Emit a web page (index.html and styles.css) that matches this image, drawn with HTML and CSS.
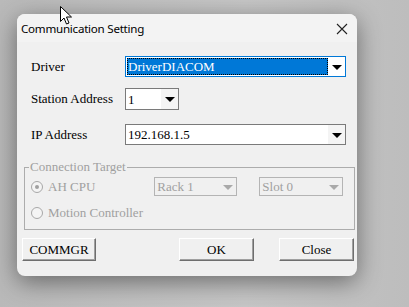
FILE: index.html
```html
<!DOCTYPE html>
<html lang="en">
<head>
    <meta charset="UTF-8">
    <title>Communication Setting</title>
    <link rel="stylesheet" href="styles.css">
</head>
<body>
    <div class="dialog">
        <div class="titlebar">
            <span class="title">Communication Setting</span>
            <svg class="close-icon" width="12" height="12" viewBox="0 0 12 12">
                <path d="M1 1 L11 11 M11 1 L1 11" stroke="#222" stroke-width="1.1" fill="none"/>
            </svg>
        </div>

        <div class="form">
            <div class="row row-driver">
                <label>Driver</label>
                <div class="combo combo-focus combo-wide">
                    <span class="combo-value selected">DriverDIACOM</span>
                    <span class="combo-arrow"></span>
                </div>
            </div>
            <div class="row row-station">
                <label>Station Address</label>
                <div class="combo combo-small">
                    <span class="combo-value">1</span>
                    <span class="combo-arrow shaded"></span>
                </div>
            </div>
            <div class="row row-ip">
                <label>IP Address</label>
                <div class="combo combo-wide">
                    <span class="combo-value">192.168.1.5</span>
                    <span class="combo-arrow shaded"></span>
                </div>
            </div>
        </div>

        <fieldset class="group">
            <legend>Connection Target</legend>
            <div class="group-row">
                <span class="radio checked"></span>
                <span class="radio-label">AH CPU</span>
                <div class="combo combo-disabled combo-rack">
                    <span class="combo-value">Rack 1</span>
                    <span class="combo-arrow"></span>
                </div>
                <div class="combo combo-disabled combo-slot">
                    <span class="combo-value">Slot 0</span>
                    <span class="combo-arrow"></span>
                </div>
            </div>
            <div class="group-row">
                <span class="radio"></span>
                <span class="radio-label">Motion Controller</span>
            </div>
        </fieldset>

        <div class="buttons">
            <button class="btn btn-commgr">COMMGR</button>
            <button class="btn btn-ok">OK</button>
            <button class="btn btn-close">Close</button>
        </div>
    </div>

    <svg class="cursor" width="14" height="20" viewBox="0 0 14 20">
        <path d="M0.5 0.5 L0.5 15.5 L4 12 L6.5 18 L9 17 L6.5 11 L11.5 11 Z" fill="#fff" stroke="#000" stroke-width="1"/>
    </svg>
</body>
</html>
```

FILE: styles.css
```css
body {
    margin: 0;
    width: 409px;
    height: 307px;
    overflow: hidden;
    background: linear-gradient(90deg, #b9b9b9 0%, #c6c6c6 60%, #bdbdbd 100%);
    font-family: "Liberation Serif", "Times New Roman", serif;
    font-size: 13px;
    color: #000;
}

.dialog {
    margin: 14px 0 0 17px;
    width: 340px;
    height: 262px;
    background-color: #f0f0f0;
    border-radius: 8px;
    box-shadow: 0 6px 24px rgba(0, 0, 0, 0.45);
    overflow: hidden;
}

.titlebar {
    height: 28px;
    display: flex;
    align-items: center;
    justify-content: space-between;
    padding: 0 9px 0 4px;
    background-color: #f3f3f3;
}

.title {
    font-family: "Noto Sans", "Open Sans", sans-serif;
    font-size: 11.6px;
    letter-spacing: -0.25px;
    color: #000;
}

.close-icon {
    margin-top: 1px;
}

.form {
    padding: 14px 0 0 14px;
}

.row {
    display: flex;
    align-items: center;
}

.row label {
    width: 94px;
}

.row-station {
    margin-top: 11px;
}

.row-ip {
    margin-top: 14px;
}

/* combo boxes */
.combo {
    box-sizing: border-box;
    height: 21px;
    display: flex;
    align-items: center;
    border: 1px solid #7a7a7a;
    background-color: #fff;
}

.combo-wide {
    width: 221px;
}

.combo-small {
    width: 54px;
    height: 22px;
}

.combo-focus {
    border-color: #0078d7;
}

.combo-value {
    flex: 1;
    padding-left: 2px;
    line-height: 17px;
    white-space: nowrap;
}

.combo-value.selected {
    margin: 1px 0 1px 1px;
    padding-left: 1px;
    background-color: #0078d7;
    color: #fff;
    outline: 1px dotted #000;
    outline-offset: -1px;
}

.combo-arrow {
    width: 17px;
    height: 100%;
    position: relative;
}

.combo-arrow.shaded {
    background-color: #f4f4f4;
}

.combo-arrow::after {
    content: "";
    position: absolute;
    left: 4px;
    top: 50%;
    margin-top: -2px;
    border-left: 5px solid transparent;
    border-right: 5px solid transparent;
    border-top: 5px solid #000;
}

.combo-disabled {
    height: 19px;
    border-color: #b4b4b4;
    background-color: #f0f0f0;
    color: #a0a0a0;
}

.combo-disabled .combo-value {
    padding-left: 2px;
}

.combo-disabled .combo-arrow::after {
    border-top-color: #a9a9a9;
}

.combo-rack {
    width: 83px;
    margin-left: 59px;
}

.combo-slot {
    width: 84px;
    margin-left: 22px;
}

/* group box */
.group {
    margin: 15px 0 0 7px;
    width: 331px;
    height: 70px;
    box-sizing: border-box;
    border: 1px solid #acacac;
    padding: 3px 0 0 6px;
    color: #a0a0a0;
}

.group legend {
    padding: 0 1px;
    margin-left: -2px;
    line-height: 14px;
}

.group-row {
    display: flex;
    align-items: center;
    height: 19px;
}

.group-row + .group-row {
    margin-top: 7px;
}

.radio {
    box-sizing: border-box;
    width: 12px;
    height: 12px;
    border: 1px solid #a8a8a8;
    border-radius: 50%;
    background-color: #f4f4f4;
    position: relative;
}

.radio.checked::after {
    content: "";
    position: absolute;
    left: 3px;
    top: 3px;
    width: 4px;
    height: 4px;
    border-radius: 50%;
    background-color: #a0a0a0;
}

.radio-label {
    margin-left: 5px;
}

/* buttons */
.buttons {
    display: flex;
    padding: 8px 0 0 5px;
}

.btn {
    box-sizing: border-box;
    height: 23px;
    width: 74px;
    padding: 0;
    background-color: #f0f0f0;
    border: 1px solid;
    border-color: #fff #6e6e6e #6e6e6e #fff;
    box-shadow: inset -1px -1px 0 #a0a0a0;
    font-family: "Liberation Serif", "Times New Roman", serif;
    font-size: 13px;
    color: #000;
}

.btn-ok {
    width: 75px;
    margin-left: 83px;
}

.btn-close {
    width: 75px;
    margin-left: 25px;
}

.cursor {
    position: absolute;
    left: 60px;
    top: 6px;
}
```
